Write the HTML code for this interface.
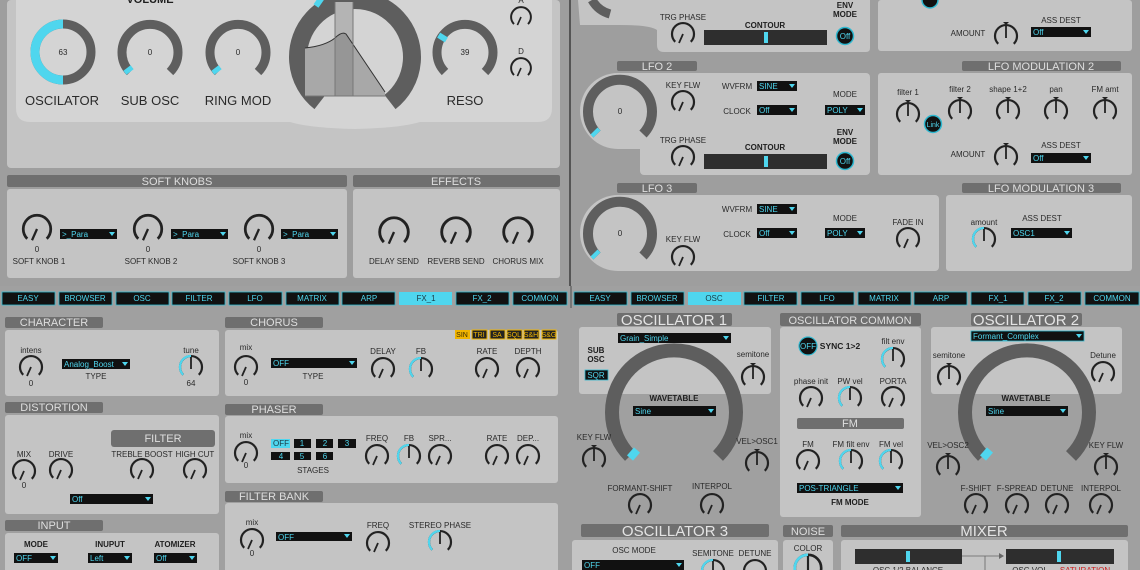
<!DOCTYPE html>
<html><head><meta charset="utf-8"><style>
html,body{margin:0;padding:0;background:#9e9e9e;}
svg{display:block;font-family:"Liberation Sans",Arial,sans-serif;}
.l{font-size:8px;fill:#2a2a2a;text-anchor:middle;}
.lb{font-size:8px;fill:#1e1e1e;text-anchor:middle;font-weight:bold;}
.h{font-size:11px;fill:#dedede;text-anchor:middle;}
.hb{font-size:15px;fill:#e4e4e4;text-anchor:middle;}
.dd{font-size:8px;fill:#4fd6ee;}
.tab{font-size:8px;fill:#4fd6ee;text-anchor:middle;}
.big{font-size:13px;fill:#2a2a2a;text-anchor:middle;}
</style></head><body>
<svg width="1140" height="570" viewBox="0 0 1140 570" xmlns="http://www.w3.org/2000/svg">
<defs>
<g id="k"><path d="M-7.8 7.8A11 11 0 1 1 7.8 7.8" fill="none" stroke="#222" stroke-width="2.2"/><path d="M0 0L-4 9" stroke="#222" stroke-width="1.8"/></g>
<g id="kt"><path d="M-7.8 7.8A11 11 0 1 1 7.8 7.8" fill="none" stroke="#222" stroke-width="2.2"/><path d="M0 2L0 -10" stroke="#222" stroke-width="1.8"/><path d="M-3 -14L3 -14L0 -11Z" fill="#222"/></g>
<g id="kc"><path d="M-7.8 7.8A11 11 0 1 1 7.8 7.8" fill="none" stroke="#222" stroke-width="2.2"/><path d="M-7.8 7.8A11 11 0 0 1 0 -11" fill="none" stroke="#4fd6ee" stroke-width="2.2"/><path d="M0 2L0 -10" stroke="#222" stroke-width="1.8"/></g>
<g id="tri"><path d="M-3 -2L3 -2L0 2Z" fill="#4fd6ee"/></g>
</defs>

<!-- ============ TOP LEFT ============ -->
<rect x="0" y="0" width="570" height="286" fill="#9e9e9e"/>
<rect x="7" y="0" width="553" height="168" rx="4" fill="#c4c4c4"/>
<path d="M16 0H552V108Q552 122 538 122H420Q400 128 355 129Q310 128 290 122H30Q16 122 16 108Z" fill="#d4d4d4"/>
<text class="lb" x="150" y="3" style="font-size:11px">VOLUME</text>
<circle cx="63" cy="52" r="28" fill="none" stroke="#5e5e5e" stroke-width="9"/>
<path d="M63 80A28 28 0 0 1 63 24" fill="none" stroke="#4fd6ee" stroke-width="9"/>
<text class="l" x="63" y="55">63</text>
<g fill="none" stroke-width="9">
<path d="M130 72A28 28 0 1 1 170 72" stroke="#5e5e5e"/><path d="M130 72L127 68" stroke="#4fd6ee" stroke-width="9"/>
<path d="M218 72A28 28 0 1 1 258 72" stroke="#5e5e5e"/><path d="M218 72L215 68" stroke="#4fd6ee"/>
<path d="M445 72A28 28 0 1 1 485 72" stroke="#5e5e5e"/>
<path d="M441 40L444 35" stroke="#4fd6ee" stroke-width="9"/>
</g>
<text class="l" x="150" y="55">0</text><text class="l" x="238" y="55">0</text><text class="l" x="465" y="55">39</text>
<text class="big" x="62" y="105">OSCILATOR</text><text class="big" x="150" y="105">SUB OSC</text><text class="big" x="238" y="105">RING MOD</text><text class="big" x="465" y="105">RESO</text>
<!-- big envelope knob -->
<path d="M320 102A57 57 0 1 1 390 102" fill="none" stroke="#5e5e5e" stroke-width="18"/>
<path d="M316 6L323 -4" stroke="#4fd6ee" stroke-width="6"/>
<path d="M305 48Q325 46 335 38L335 96H305Z" fill="#a8a8a8"/>
<rect x="335" y="2" width="18" height="94" fill="#b4b4b4"/>
<path d="M335 38Q342 31 346 34L353 44V96H335Z" fill="#969696"/>
<path d="M353 44L385 92V96H353Z" fill="#a8a8a8"/>
<path d="M305 48Q325 46 335 38Q342 31 346 34L385 92" fill="none" stroke="#333" stroke-width="1"/>
<path d="M335 2V96M353 2V96" stroke="#777" stroke-width="1"/>
<path d="M305 96H386" stroke="#777"/>
<text class="l" x="521" y="3">A</text><use href="#k" transform="translate(521,17) scale(0.9)"/>
<text class="l" x="521" y="54">D</text><use href="#k" transform="translate(521,68) scale(0.9)"/>

<rect x="7" y="175" width="340" height="12" rx="2" fill="#6f6f6f"/><text class="h" x="177" y="185">SOFT KNOBS</text>
<rect x="353" y="175" width="207" height="12" rx="2" fill="#6f6f6f"/><text class="h" x="456" y="185">EFFECTS</text>
<rect x="7" y="189" width="340" height="89" rx="3" fill="#c4c4c4"/>
<rect x="353" y="189" width="207" height="89" rx="3" fill="#c4c4c4"/>
<use href="#k" transform="translate(37,229) scale(1.25)"/><use href="#k" transform="translate(148,229) scale(1.25)"/><use href="#k" transform="translate(259,229) scale(1.25)"/>
<g><rect x="60" y="229" width="57" height="10" fill="#111"/><text class="dd" x="62" y="237">&gt;_Para</text><use href="#tri" transform="translate(112,234)"/>
<rect x="171" y="229" width="57" height="10" fill="#111"/><text class="dd" x="173" y="237">&gt;_Para</text><use href="#tri" transform="translate(223,234)"/>
<rect x="281" y="229" width="57" height="10" fill="#111"/><text class="dd" x="283" y="237">&gt;_Para</text><use href="#tri" transform="translate(333,234)"/></g>
<text class="l" x="37" y="252">0</text><text class="l" x="148" y="252">0</text><text class="l" x="259" y="252">0</text>
<text class="l" x="39" y="264">SOFT KNOB 1</text><text class="l" x="151" y="264">SOFT KNOB 2</text><text class="l" x="259" y="264">SOFT KNOB 3</text>
<use href="#k" transform="translate(394,232) scale(1.3)"/><use href="#k" transform="translate(456,232) scale(1.3)"/><use href="#k" transform="translate(518,232) scale(1.3)"/>
<text class="l" x="394" y="264">DELAY SEND</text><text class="l" x="456" y="264">REVERB SEND</text><text class="l" x="518" y="264">CHORUS MIX</text>

<rect x="569" y="0" width="2" height="286" fill="#555"/>

<!-- ============ TOP RIGHT ============ -->
<path d="M578 0H870V48Q870 52 866 52H664Q657 52 657 45V30Q650 25 620 25H580Z" fill="#c4c4c4"/>
<path d="M592 0A30 30 0 0 0 610 14" fill="none" stroke="#5e5e5e" stroke-width="9"/>
<text class="l" x="683" y="20">TRG PHASE</text><use href="#k" transform="translate(683,34)"/>
<text class="lb" x="765" y="28">CONTOUR</text><rect x="704" y="30" width="123" height="15" fill="#2e2e2e"/><rect x="764" y="32" width="4" height="11" fill="#4fd6ee"/>
<text class="lb" x="845" y="8">ENV</text><text class="lb" x="845" y="17">MODE</text>
<circle cx="845" cy="36" r="8.5" fill="#111" stroke="#2fb8d0" stroke-width="1.5"/><text class="dd" x="845" y="39" text-anchor="middle">Off</text>
<rect x="878" y="0" width="254" height="51" rx="3" fill="#c4c4c4"/>
<circle cx="930" cy="0" r="8" fill="#111" stroke="#2fb8d0" stroke-width="1.5"/>
<text class="l" x="968" y="36">AMOUNT</text><use href="#kt" transform="translate(1006,36)"/>
<text class="l" x="1061" y="23">ASS DEST</text><rect x="1031" y="27" width="60" height="10" fill="#111"/><text class="dd" x="1033" y="35">Off</text><use href="#tri" transform="translate(1086,32)"/>

<rect x="617" y="61" width="80" height="10" rx="2" fill="#6f6f6f"/><text class="h" x="657" y="70">LFO 2</text>
<rect x="962" y="61" width="159" height="10" rx="2" fill="#6f6f6f"/><text class="h" x="1041" y="70">LFO MODULATION 2</text>
<rect x="580" y="73" width="290" height="76" rx="38" fill="#c4c4c4"/><rect x="640" y="73" width="230" height="102" rx="4" fill="#c4c4c4"/>
<path d="M597 134A32 32 0 1 1 643 134" fill="none" stroke="#5e5e5e" stroke-width="10"/><path d="M597 134L594 131" stroke="#4fd6ee" stroke-width="10"/>
<text class="l" x="620" y="114">0</text>
<text class="l" x="683" y="88">KEY FLW</text><use href="#k" transform="translate(683,102)"/>
<text class="l" x="737" y="89">WVFRM</text><rect x="757" y="81" width="40" height="10" fill="#111"/><text class="dd" x="759" y="89">SINE</text><use href="#tri" transform="translate(792,86)"/>
<text class="l" x="737" y="114">CLOCK</text><rect x="757" y="105" width="40" height="10" fill="#111"/><text class="dd" x="759" y="113">Off</text><use href="#tri" transform="translate(792,110)"/>
<text class="l" x="845" y="97">MODE</text><rect x="825" y="105" width="40" height="10" fill="#111"/><text class="dd" x="827" y="113">POLY</text><use href="#tri" transform="translate(860,110)"/>
<text class="l" x="683" y="143">TRG PHASE</text><use href="#k" transform="translate(683,157)"/>
<text class="lb" x="765" y="150">CONTOUR</text><rect x="704" y="154" width="123" height="15" fill="#2e2e2e"/><rect x="764" y="156" width="4" height="11" fill="#4fd6ee"/>
<text class="lb" x="845" y="135">ENV</text><text class="lb" x="845" y="144">MODE</text>
<circle cx="845" cy="161" r="8.5" fill="#111" stroke="#2fb8d0" stroke-width="1.5"/><text class="dd" x="845" y="164" text-anchor="middle">Off</text>
<rect x="878" y="73" width="254" height="102" rx="3" fill="#c4c4c4"/>
<text class="l" x="908" y="95">filter 1</text><use href="#kt" transform="translate(908,114)"/>
<text class="l" x="960" y="92">filter 2</text><use href="#kt" transform="translate(960,111)"/>
<text class="l" x="1008" y="92">shape 1+2</text><use href="#kt" transform="translate(1008,111)"/>
<text class="l" x="1056" y="92">pan</text><use href="#kt" transform="translate(1056,111)"/>
<text class="l" x="1105" y="92">FM amt</text><use href="#kt" transform="translate(1105,111)"/>
<circle cx="933" cy="124" r="8.5" fill="#111" stroke="#2fb8d0" stroke-width="1.5"/><text class="dd" x="933" y="127" text-anchor="middle" style="font-size:7px">Link</text>
<text class="l" x="968" y="157">AMOUNT</text><use href="#kt" transform="translate(1006,157)"/>
<text class="l" x="1061" y="148">ASS DEST</text><rect x="1031" y="153" width="60" height="10" fill="#111"/><text class="dd" x="1033" y="161">Off</text><use href="#tri" transform="translate(1086,158)"/>

<rect x="617" y="183" width="80" height="10" rx="2" fill="#6f6f6f"/><text class="h" x="657" y="192">LFO 3</text>
<rect x="962" y="183" width="159" height="10" rx="2" fill="#6f6f6f"/><text class="h" x="1041" y="192">LFO MODULATION 3</text>
<rect x="580" y="195" width="359" height="76" rx="38" fill="#c4c4c4"/><rect x="640" y="195" width="299" height="76" rx="4" fill="#c4c4c4"/>
<path d="M597 256A32 32 0 1 1 643 256" fill="none" stroke="#5e5e5e" stroke-width="10"/><path d="M597 256L594 253" stroke="#4fd6ee" stroke-width="10"/>
<text class="l" x="620" y="236">0</text>
<text class="l" x="737" y="212">WVFRM</text><rect x="757" y="204" width="40" height="10" fill="#111"/><text class="dd" x="759" y="212">SINE</text><use href="#tri" transform="translate(792,209)"/>
<text class="l" x="683" y="242">KEY FLW</text><use href="#k" transform="translate(683,257)"/>
<text class="l" x="737" y="237">CLOCK</text><rect x="757" y="228" width="40" height="10" fill="#111"/><text class="dd" x="759" y="236">Off</text><use href="#tri" transform="translate(792,233)"/>
<text class="l" x="845" y="221">MODE</text><rect x="825" y="228" width="40" height="10" fill="#111"/><text class="dd" x="827" y="236">POLY</text><use href="#tri" transform="translate(860,233)"/>
<text class="l" x="908" y="225">FADE IN</text><use href="#k" transform="translate(908,239)"/>
<rect x="946" y="195" width="186" height="76" rx="3" fill="#c4c4c4"/>
<text class="l" x="984" y="225">amount</text><use href="#kc" transform="translate(984,239)"/>
<text class="l" x="1042" y="221">ASS DEST</text><rect x="1011" y="228" width="61" height="10" fill="#111"/><text class="dd" x="1013" y="236">OSC1</text><use href="#tri" transform="translate(1067,233)"/>

<!-- ============ TABS ============ -->
<rect x="0" y="286" width="1140" height="284" fill="#a0a0a0"/>
<rect x="570" y="286" width="2" height="22" fill="#777"/>
<g>
<rect x="2" y="292" width="53" height="13" fill="#111" stroke="#2fb8d0" stroke-width="0.8"/><text class="tab" x="28" y="301">EASY</text>
<rect x="59" y="292" width="53" height="13" fill="#111" stroke="#2fb8d0" stroke-width="0.8"/><text class="tab" x="85" y="301">BROWSER</text>
<rect x="116" y="292" width="53" height="13" fill="#111" stroke="#2fb8d0" stroke-width="0.8"/><text class="tab" x="142" y="301">OSC</text>
<rect x="172" y="292" width="53" height="13" fill="#111" stroke="#2fb8d0" stroke-width="0.8"/><text class="tab" x="199" y="301">FILTER</text>
<rect x="229" y="292" width="53" height="13" fill="#111" stroke="#2fb8d0" stroke-width="0.8"/><text class="tab" x="255" y="301">LFO</text>
<rect x="286" y="292" width="53" height="13" fill="#111" stroke="#2fb8d0" stroke-width="0.8"/><text class="tab" x="312" y="301">MATRIX</text>
<rect x="342" y="292" width="53" height="13" fill="#111" stroke="#2fb8d0" stroke-width="0.8"/><text class="tab" x="369" y="301">ARP</text>
<rect x="399" y="292" width="53" height="13" fill="#4fd6ee"/><text class="tab" x="426" y="301" style="fill:#1a3a44">FX_1</text>
<rect x="456" y="292" width="53" height="13" fill="#111" stroke="#2fb8d0" stroke-width="0.8"/><text class="tab" x="482" y="301">FX_2</text>
<rect x="513" y="292" width="54" height="13" fill="#111" stroke="#2fb8d0" stroke-width="0.8"/><text class="tab" x="540" y="301">COMMON</text>
</g>
<g transform="translate(572,0)">
<rect x="2" y="292" width="53" height="13" fill="#111" stroke="#2fb8d0" stroke-width="0.8"/><text class="tab" x="28" y="301">EASY</text>
<rect x="59" y="292" width="53" height="13" fill="#111" stroke="#2fb8d0" stroke-width="0.8"/><text class="tab" x="85" y="301">BROWSER</text>
<rect x="116" y="292" width="53" height="13" fill="#4fd6ee"/><text class="tab" x="142" y="301" style="fill:#1a3a44">OSC</text>
<rect x="172" y="292" width="53" height="13" fill="#111" stroke="#2fb8d0" stroke-width="0.8"/><text class="tab" x="199" y="301">FILTER</text>
<rect x="229" y="292" width="53" height="13" fill="#111" stroke="#2fb8d0" stroke-width="0.8"/><text class="tab" x="255" y="301">LFO</text>
<rect x="286" y="292" width="53" height="13" fill="#111" stroke="#2fb8d0" stroke-width="0.8"/><text class="tab" x="312" y="301">MATRIX</text>
<rect x="342" y="292" width="53" height="13" fill="#111" stroke="#2fb8d0" stroke-width="0.8"/><text class="tab" x="369" y="301">ARP</text>
<rect x="399" y="292" width="53" height="13" fill="#111" stroke="#2fb8d0" stroke-width="0.8"/><text class="tab" x="426" y="301">FX_1</text>
<rect x="456" y="292" width="53" height="13" fill="#111" stroke="#2fb8d0" stroke-width="0.8"/><text class="tab" x="482" y="301">FX_2</text>
<rect x="513" y="292" width="54" height="13" fill="#111" stroke="#2fb8d0" stroke-width="0.8"/><text class="tab" x="540" y="301">COMMON</text>
</g>

<!-- ============ BOTTOM LEFT ============ -->
<rect x="5" y="317" width="98" height="11" rx="2" fill="#6f6f6f"/><text class="h" x="54" y="326">CHARACTER</text>
<rect x="5" y="330" width="214" height="66" rx="3" fill="#c4c4c4"/>
<text class="l" x="31" y="353">intens</text><use href="#k" transform="translate(31,367)"/><text class="l" x="31" y="386">0</text>
<rect x="62" y="359" width="68" height="10" fill="#111"/><text class="dd" x="64" y="367">Analog_Boost</text><use href="#tri" transform="translate(125,364)"/>
<text class="l" x="96" y="379">TYPE</text>
<text class="l" x="191" y="353">tune</text><use href="#kc" transform="translate(191,367)"/><text class="l" x="191" y="386">64</text>

<rect x="5" y="402" width="98" height="11" rx="2" fill="#6f6f6f"/><text class="h" x="54" y="411">DISTORTION</text>
<rect x="5" y="415" width="214" height="99" rx="3" fill="#c4c4c4"/>
<rect x="111" y="430" width="104" height="17" rx="3" fill="#6f6f6f"/><text class="h" x="163" y="442">FILTER</text>
<text class="l" x="24" y="457">MIX</text><use href="#k" transform="translate(24,471)"/><text class="l" x="24" y="488">0</text>
<text class="l" x="61" y="457">DRIVE</text><use href="#k" transform="translate(61,470)"/>
<text class="l" x="142" y="457">TREBLE BOOST</text><use href="#k" transform="translate(142,470)"/>
<text class="l" x="195" y="457">HIGH CUT</text><use href="#k" transform="translate(195,470)"/>
<rect x="70" y="494" width="83" height="10" fill="#111"/><text class="dd" x="72" y="502">Off</text><use href="#tri" transform="translate(148,499)"/>

<rect x="5" y="520" width="98" height="11" rx="2" fill="#6f6f6f"/><text class="h" x="54" y="529">INPUT</text>
<rect x="5" y="533" width="214" height="40" rx="3" fill="#c4c4c4"/>
<text class="lb" x="36" y="547">MODE</text><text class="lb" x="110" y="547">INUPUT</text><text class="lb" x="175" y="547">ATOMIZER</text>
<rect x="14" y="553" width="44" height="10" fill="#111"/><text class="dd" x="16" y="561">OFF</text><use href="#tri" transform="translate(53,558)"/>
<rect x="88" y="553" width="44" height="10" fill="#111"/><text class="dd" x="90" y="561">Left</text><use href="#tri" transform="translate(127,558)"/>
<rect x="154" y="553" width="43" height="10" fill="#111"/><text class="dd" x="156" y="561">Off</text><use href="#tri" transform="translate(192,558)"/>

<rect x="225" y="317" width="98" height="11" rx="2" fill="#6f6f6f"/><text class="h" x="274" y="326">CHORUS</text>
<rect x="225" y="330" width="333" height="66" rx="3" fill="#c4c4c4"/>
<g>
<rect x="455" y="330" width="15" height="9" fill="#f0b400"/><text x="462" y="337" text-anchor="middle" fill="#3a2a00" style="font-size:7px">SIN</text>
<rect x="472" y="330" width="15" height="9" fill="#222" stroke="#f0b400"/><text x="479" y="337" text-anchor="middle" fill="#f0b400" style="font-size:7px">TRI</text>
<rect x="490" y="330" width="15" height="9" fill="#222" stroke="#f0b400"/><text x="497" y="337" text-anchor="middle" fill="#f0b400" style="font-size:7px">SA</text>
<rect x="507" y="330" width="15" height="9" fill="#222" stroke="#f0b400"/><text x="514" y="337" text-anchor="middle" fill="#f0b400" style="font-size:7px">SQL</text>
<rect x="524" y="330" width="15" height="9" fill="#222" stroke="#f0b400"/><text x="531" y="337" text-anchor="middle" fill="#f0b400" style="font-size:7px">S&amp;H</text>
<rect x="542" y="330" width="14" height="9" fill="#222" stroke="#f0b400"/><text x="549" y="337" text-anchor="middle" fill="#f0b400" style="font-size:7px">S&amp;G</text>
</g>
<text class="l" x="246" y="350">mix</text><use href="#k" transform="translate(246,367)"/><text class="l" x="246" y="385">0</text>
<rect x="271" y="358" width="86" height="10" fill="#111"/><text class="dd" x="273" y="366">OFF</text><use href="#tri" transform="translate(352,363)"/>
<text class="l" x="313" y="379">TYPE</text>
<text class="l" x="383" y="354">DELAY</text><use href="#k" transform="translate(383,369)"/>
<text class="l" x="421" y="354">FB</text><use href="#kc" transform="translate(421,369)"/>
<text class="l" x="487" y="354">RATE</text><use href="#k" transform="translate(487,369)"/>
<text class="l" x="528" y="354">DEPTH</text><use href="#k" transform="translate(528,369)"/>

<rect x="225" y="404" width="98" height="11" rx="2" fill="#6f6f6f"/><text class="h" x="274" y="413">PHASER</text>
<rect x="225" y="416" width="333" height="67" rx="3" fill="#c4c4c4"/>
<text class="l" x="246" y="438">mix</text><use href="#k" transform="translate(246,453)"/><text class="l" x="246" y="468">0</text>
<rect x="271" y="439" width="19" height="9" fill="#4fd6ee"/><text x="281" y="446" text-anchor="middle" fill="#1a3a44" style="font-size:8px">OFF</text>
<rect x="294" y="439" width="17" height="9" fill="#111"/><text class="tab" x="302" y="446">1</text>
<rect x="316" y="439" width="17" height="9" fill="#111"/><text class="tab" x="325" y="446">2</text>
<rect x="338" y="439" width="18" height="9" fill="#111"/><text class="tab" x="347" y="446">3</text>
<rect x="271" y="452" width="19" height="8" fill="#111"/><text class="tab" x="281" y="459">4</text>
<rect x="294" y="452" width="17" height="8" fill="#111"/><text class="tab" x="302" y="459">5</text>
<rect x="316" y="452" width="17" height="8" fill="#111"/><text class="tab" x="325" y="459">6</text>
<text class="l" x="313" y="473">STAGES</text>
<text class="l" x="377" y="441">FREQ</text><use href="#k" transform="translate(377,456)"/>
<text class="l" x="409" y="441">FB</text><use href="#kc" transform="translate(409,456)"/>
<text class="l" x="440" y="441">SPR...</text><use href="#k" transform="translate(440,456)"/>
<text class="l" x="497" y="441">RATE</text><use href="#k" transform="translate(497,456)"/>
<text class="l" x="528" y="441">DEP...</text><use href="#k" transform="translate(528,456)"/>

<rect x="225" y="491" width="98" height="11" rx="2" fill="#6f6f6f"/><text class="h" x="274" y="500">FILTER BANK</text>
<rect x="225" y="503" width="333" height="70" rx="3" fill="#c4c4c4"/>
<text class="l" x="252" y="525">mix</text><use href="#k" transform="translate(252,540)"/><text class="l" x="252" y="556">0</text>
<rect x="276" y="532" width="76" height="9" fill="#111"/><text class="dd" x="278" y="540">OFF</text><use href="#tri" transform="translate(347,536)"/>
<text class="l" x="378" y="528">FREQ</text><use href="#k" transform="translate(378,543)"/>
<text class="l" x="440" y="528">STEREO PHASE</text><use href="#kc" transform="translate(440,542)"/>

<!-- ============ BOTTOM RIGHT ============ -->
<rect x="617" y="313" width="115" height="13" rx="2" fill="#6f6f6f"/><text class="hb" x="674" y="325">OSCILLATOR 1</text>
<rect x="579" y="327" width="192" height="67" rx="3" fill="#c4c4c4"/>
<path d="M630 456A62 62 0 1 1 718 456" fill="none" stroke="#5e5e5e" stroke-width="14"/>
<path d="M637 450L630 458" stroke="#4fd6ee" stroke-width="8"/>
<rect x="618" y="333" width="113" height="10" fill="#111"/><text class="dd" x="620" y="341">Grain_Simple</text><use href="#tri" transform="translate(726,338)"/>
<text class="lb" x="596" y="353">SUB</text><text class="lb" x="596" y="362">OSC</text>
<rect x="585" y="370" width="23" height="10" fill="#111" stroke="#2fb8d0" stroke-width="0.8"/><text class="tab" x="596" y="378">SQR</text>
<text class="l" x="753" y="357">semitone</text><use href="#kt" transform="translate(753,377)"/>
<text class="lb" x="674" y="401">WAVETABLE</text>
<rect x="633" y="406" width="83" height="10" fill="#111"/><text class="dd" x="635" y="414">Sine</text><use href="#tri" transform="translate(711,411)"/>
<text class="l" x="594" y="440">KEY FLW</text><use href="#kt" transform="translate(594,459)"/>
<text class="l" x="757" y="444">VEL&gt;OSC1</text><use href="#kt" transform="translate(757,463)"/>
<text class="l" x="640" y="491">FORMANT-SHIFT</text><use href="#k" transform="translate(640,505)"/>
<text class="l" x="712" y="489">INTERPOL</text><use href="#k" transform="translate(712,505)"/>

<rect x="780" y="313" width="141" height="13" rx="2" fill="#6f6f6f"/><text class="h" x="850" y="324">OSCILLATOR COMMON</text>
<rect x="780" y="327" width="141" height="190" rx="3" fill="#c4c4c4"/>
<circle cx="808" cy="346" r="9" fill="#111" stroke="#2fb8d0" stroke-width="1.2"/><text class="tab" x="808" y="349">OFF</text>
<text class="lb" x="840" y="349" style="font-size:8.5px">SYNC 1&gt;2</text>
<text class="l" x="893" y="344">filt env</text><use href="#kc" transform="translate(893,359)"/>
<text class="l" x="811" y="384">phase init</text><use href="#k" transform="translate(811,398)"/>
<text class="l" x="850" y="384">PW vel</text><use href="#kc" transform="translate(850,398)"/>
<text class="l" x="893" y="384">PORTA</text><use href="#k" transform="translate(893,398)"/>
<rect x="797" y="418" width="107" height="11" rx="2" fill="#6f6f6f"/><text class="h" x="850" y="427">FM</text>
<text class="l" x="808" y="447">FM</text><use href="#k" transform="translate(808,461)"/>
<text class="l" x="851" y="447">FM filt env</text><use href="#kc" transform="translate(851,461)"/>
<text class="l" x="891" y="447">FM vel</text><use href="#kc" transform="translate(891,461)"/>
<rect x="797" y="483" width="106" height="10" fill="#111"/><text class="dd" x="799" y="491">POS-TRIANGLE</text><use href="#tri" transform="translate(898,488)"/>
<text class="lb" x="850" y="505">FM MODE</text>

<rect x="971" y="313" width="111" height="13" rx="2" fill="#6f6f6f"/><text class="hb" x="1026" y="325">OSCILLATOR 2</text>
<rect x="931" y="327" width="191" height="67" rx="3" fill="#c4c4c4"/>
<path d="M983 456A62 62 0 1 1 1071 456" fill="none" stroke="#5e5e5e" stroke-width="14"/>
<path d="M990 450L983 458" stroke="#4fd6ee" stroke-width="8"/>
<rect x="971" y="331" width="113" height="10" fill="#111" stroke="#2fb8d0" stroke-width="0.8"/><text class="dd" x="973" y="339">Formant_Complex</text><use href="#tri" transform="translate(1079,336)"/>
<text class="l" x="949" y="358">semitone</text><use href="#kt" transform="translate(949,377)"/>
<text class="l" x="1103" y="358">Detune</text><use href="#k" transform="translate(1103,373)"/>
<text class="lb" x="1026" y="401">WAVETABLE</text>
<rect x="986" y="406" width="82" height="10" fill="#111"/><text class="dd" x="988" y="414">Sine</text><use href="#tri" transform="translate(1063,411)"/>
<text class="l" x="948" y="448">VEL&gt;OSC2</text><use href="#kt" transform="translate(948,467)"/>
<text class="l" x="1106" y="448">KEY FLW</text><use href="#kt" transform="translate(1106,467)"/>
<text class="l" x="976" y="491">F-SHIFT</text><use href="#k" transform="translate(976,505)"/>
<text class="l" x="1017" y="491">F-SPREAD</text><use href="#k" transform="translate(1017,505)"/>
<text class="l" x="1057" y="491">DETUNE</text><use href="#k" transform="translate(1057,505)"/>
<text class="l" x="1101" y="491">INTERPOL</text><use href="#k" transform="translate(1101,505)"/>

<rect x="581" y="524" width="188" height="13" rx="2" fill="#6f6f6f"/><text class="hb" x="675" y="536">OSCILLATOR 3</text>
<rect x="572" y="540" width="206" height="33" rx="3" fill="#c4c4c4"/>
<text class="l" x="634" y="553">OSC MODE</text>
<rect x="582" y="560" width="102" height="10" fill="#111"/><text class="dd" x="584" y="568">OFF</text><use href="#tri" transform="translate(679,565)"/>
<text class="l" x="713" y="556">SEMITONE</text><use href="#kc" transform="translate(713,571)"/>
<text class="l" x="755" y="556">DETUNE</text><use href="#k" transform="translate(755,571)"/>

<rect x="783" y="525" width="50" height="12" rx="2" fill="#6f6f6f"/><text class="h" x="808" y="535">NOISE</text>
<rect x="783" y="540" width="50" height="33" rx="3" fill="#c4c4c4"/>
<text class="l" x="808" y="551">COLOR</text><use href="#kc" transform="translate(808,568) scale(1.2)"/>

<rect x="841" y="525" width="287" height="12" rx="2" fill="#6f6f6f"/><text class="hb" x="984" y="536">MIXER</text>
<rect x="841" y="540" width="287" height="33" rx="3" fill="#c4c4c4"/>
<rect x="855" y="549" width="107" height="15" fill="#2e2e2e"/><rect x="906" y="551" width="4" height="11" fill="#4fd6ee"/>
<rect x="1006" y="549" width="108" height="15" fill="#2e2e2e"/><rect x="1057" y="551" width="4" height="11" fill="#4fd6ee"/>
<path d="M962 556H1002M985 556V570" stroke="#666" stroke-width="0.8"/><path d="M999 553L1004 556L999 559Z" fill="#666"/>
<text class="l" x="908" y="573">OSC 1/2 BALANCE</text><text class="l" x="1030" y="573">OSC VOL</text><text class="l" x="1085" y="573" style="fill:#d02020">SATURATION</text>
</svg>
</body></html>
